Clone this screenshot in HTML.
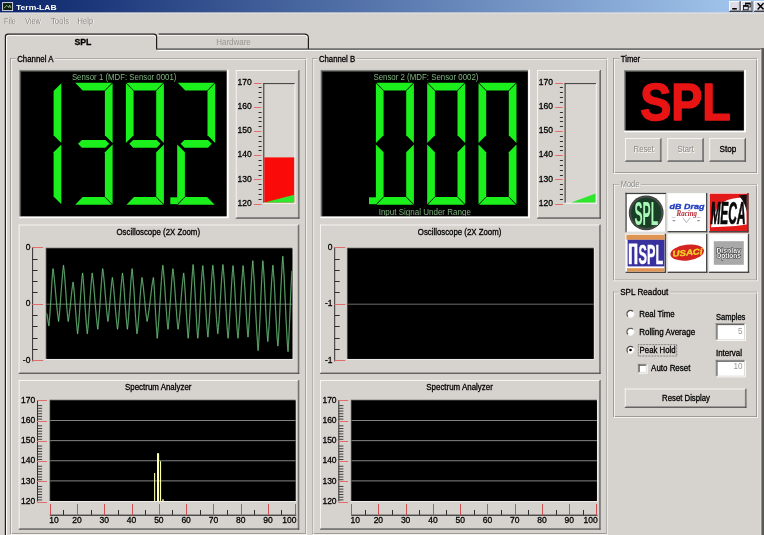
<!DOCTYPE html>
<html lang="en"><head><meta charset="utf-8"><title>Term-LAB</title>
<style>
html,body{margin:0;padding:0;}
body{width:764px;height:535px;overflow:hidden;background:#d6d3ce;position:relative;font-family:"Liberation Sans",sans-serif;font-size:8.2px;}
svg text{font-family:"Liberation Sans",sans-serif;}
</style></head><body>
<svg width="764" height="535" viewBox="0 0 764 535" font-family="'Liberation Sans', sans-serif" font-size="8.2" style="position:absolute;left:0;top:0;display:block;transform:translateZ(0);will-change:transform">
<defs><linearGradient id="tg" x1="0" y1="0" x2="1" y2="0"><stop offset="0" stop-color="#0a246a"/><stop offset="1" stop-color="#a6caf0"/></linearGradient></defs>
<rect x="0.00" y="0.00" width="764.00" height="535.00" fill="#d6d3ce" />
<rect x="0.00" y="0.00" width="764.00" height="12.60" fill="url(#tg)" />
<rect x="0.00" y="12.60" width="764.00" height="0.90" fill="#e6e5e6" />
<rect x="2.60" y="2.60" width="10.00" height="8.00" fill="#0e1e10" stroke="#e6e6f0" stroke-width="0.9"/>
<path d="M4.2,8.2 L5.6,6.4 L6.8,5.4 L8.0,6.6 L8.8,7.6 L9.6,5.2 L10.8,7.8" fill="none" stroke="#a4cc94" stroke-width="0.9"/>
<text x="16.00" y="9.80" font-size="8.1" text-anchor="start" fill="#fff" font-weight="bold" textLength="40.60" lengthAdjust="spacingAndGlyphs" >Term-LAB</text>
<rect x="729.20" y="1.10" width="11.40" height="10.70" fill="#dedde6" />
<rect x="729.20" y="1.10" width="11.40" height="0.80" fill="#fff" />
<rect x="729.20" y="1.10" width="0.80" height="10.70" fill="#fff" />
<rect x="729.20" y="11.00" width="11.40" height="0.90" fill="#303038" />
<rect x="739.70" y="1.10" width="0.90" height="10.70" fill="#303038" />
<rect x="730.00" y="10.20" width="9.70" height="0.80" fill="#85858c" />
<rect x="738.90" y="1.90" width="0.80" height="9.00" fill="#85858c" />
<rect x="741.00" y="1.10" width="11.40" height="10.70" fill="#dedde6" />
<rect x="741.00" y="1.10" width="11.40" height="0.80" fill="#fff" />
<rect x="741.00" y="1.10" width="0.80" height="10.70" fill="#fff" />
<rect x="741.00" y="11.00" width="11.40" height="0.90" fill="#303038" />
<rect x="751.50" y="1.10" width="0.90" height="10.70" fill="#303038" />
<rect x="741.80" y="10.20" width="9.70" height="0.80" fill="#85858c" />
<rect x="750.70" y="1.90" width="0.80" height="9.00" fill="#85858c" />
<rect x="754.00" y="1.10" width="12.00" height="10.70" fill="#dedde6" />
<rect x="754.00" y="1.10" width="12.00" height="0.80" fill="#fff" />
<rect x="754.00" y="1.10" width="0.80" height="10.70" fill="#fff" />
<rect x="754.00" y="11.00" width="12.00" height="0.90" fill="#303038" />
<rect x="765.10" y="1.10" width="0.90" height="10.70" fill="#303038" />
<rect x="754.80" y="10.20" width="10.30" height="0.80" fill="#85858c" />
<rect x="764.30" y="1.90" width="0.80" height="9.00" fill="#85858c" />
<rect x="732.20" y="8.00" width="4.60" height="1.60" fill="#000" />
<rect x="745.60" y="3.00" width="4.60" height="1.40" fill="#000" />
<rect x="745.60" y="3.00" width="4.60" height="4.00" fill="none" stroke="#000" stroke-width="0.8"/>
<rect x="743.60" y="5.60" width="4.60" height="4.20" fill="#dedde6" stroke="#000" stroke-width="0.8"/>
<rect x="743.60" y="5.40" width="4.60" height="1.40" fill="#000" />
<path d="M757.6,3.2 L763.6,9.4 M763.6,3.2 L757.6,9.4" stroke="#000" stroke-width="1.5" fill="none"/>
<text x="4.75" y="24.35" font-size="8.2" text-anchor="start" fill="#ffffff" font-weight="normal" textLength="12.00" lengthAdjust="spacingAndGlyphs" >File</text>
<text x="4.00" y="23.60" font-size="8.2" text-anchor="start" fill="#8a8884" font-weight="normal" textLength="12.00" lengthAdjust="spacingAndGlyphs" >File</text>
<text x="25.95" y="24.35" font-size="8.2" text-anchor="start" fill="#ffffff" font-weight="normal" textLength="15.60" lengthAdjust="spacingAndGlyphs" >View</text>
<text x="25.20" y="23.60" font-size="8.2" text-anchor="start" fill="#8a8884" font-weight="normal" textLength="15.60" lengthAdjust="spacingAndGlyphs" >View</text>
<text x="51.75" y="24.35" font-size="8.2" text-anchor="start" fill="#ffffff" font-weight="normal" textLength="18.00" lengthAdjust="spacingAndGlyphs" >Tools</text>
<text x="51.00" y="23.60" font-size="8.2" text-anchor="start" fill="#8a8884" font-weight="normal" textLength="18.00" lengthAdjust="spacingAndGlyphs" >Tools</text>
<text x="78.35" y="24.35" font-size="8.2" text-anchor="start" fill="#ffffff" font-weight="normal" textLength="15.60" lengthAdjust="spacingAndGlyphs" >Help</text>
<text x="77.60" y="23.60" font-size="8.2" text-anchor="start" fill="#8a8884" font-weight="normal" textLength="15.60" lengthAdjust="spacingAndGlyphs" >Help</text>
<path d="M5.4,535 L5.4,36.6 Q5.4,34.2 8.0,34.2 L153.8,34.2 Q156.6,34.2 156.6,37.0 L156.6,48.9" fill="none" stroke="#1c1c1c" stroke-width="1.2"/>
<path d="M6.55,535 L6.55,37.4 Q6.55,35.4 8.8,35.4 L153.4,35.4 Q155.5,35.4 155.5,37.5" fill="none" stroke="#fff" stroke-width="0.95"/>
<path d="M158.6,34.1 L304.6,34.1 Q308.4,34.1 308.4,38.0 L308.4,48.9" fill="none" stroke="#1c1c1c" stroke-width="1.2"/>
<path d="M157.7,35.3 L304.4,35.3 Q307.2,35.3 307.2,38.2" fill="none" stroke="#fff" stroke-width="0.95" opacity="0.9"/>
<line x1="156.10" y1="49.10" x2="764.00" y2="49.10" stroke="#3c3c3a" stroke-width="1.3" />
<line x1="157.40" y1="50.40" x2="761.00" y2="50.40" stroke="#fff" stroke-width="1.0" />
<rect x="761.00" y="48.20" width="3.00" height="490.00" fill="#5c5a56" />
<rect x="760.60" y="49.00" width="0.80" height="490.00" fill="#e6e5e1" />
<text x="74.40" y="45.30" font-size="8.6" text-anchor="start" fill="#000" font-weight="bold" textLength="17.00" lengthAdjust="spacingAndGlyphs"  stroke="#000" stroke-width="0.28">SPL</text>
<text x="216.20" y="44.60" font-size="8.2" text-anchor="start" fill="#97958f" font-weight="normal" textLength="34.60" lengthAdjust="spacingAndGlyphs" >Hardware</text>
<rect x="10.30" y="58.10" width="295.60" height="0.75" fill="#8a8884" />
<rect x="10.30" y="58.10" width="0.75" height="475.90" fill="#8a8884" />
<rect x="10.30" y="533.25" width="295.60" height="0.75" fill="#8a8884" />
<rect x="305.15" y="58.10" width="0.75" height="475.90" fill="#8a8884" />
<rect x="11.05" y="58.85" width="295.60" height="0.75" fill="#fbfbf9" />
<rect x="11.05" y="58.85" width="0.75" height="475.90" fill="#fbfbf9" />
<rect x="10.30" y="534.00" width="296.35" height="0.75" fill="#fbfbf9" />
<rect x="305.90" y="58.10" width="0.75" height="476.65" fill="#fbfbf9" />
<rect x="15.70" y="54.10" width="39.30" height="8.00" fill="#d6d3ce" />
<text x="17.20" y="62.00" font-size="8.2" text-anchor="start" fill="#000" font-weight="normal" textLength="36.30" lengthAdjust="spacingAndGlyphs"  stroke="#000" stroke-width="0.28">Channel A</text>
<rect x="19.10" y="69.80" width="209.60" height="148.40" fill="#ffffff" />
<rect x="19.10" y="69.80" width="207.70" height="146.70" fill="#8e8c88" />
<rect x="20.10" y="70.80" width="206.50" height="145.50" fill="#4a4a48" />
<rect x="21.10" y="71.80" width="205.20" height="144.20" fill="#000" />
<text x="71.90" y="79.90" font-size="8.2" text-anchor="start" fill="#7eb47e" font-weight="normal" textLength="104.50" lengthAdjust="spacingAndGlyphs" >Sensor 1 (MDF: Sensor 0001)</text>
<polygon points="61.30,83.35 61.30,143.00 53.60,135.30 53.60,91.05" fill="#1cf01c" />
<polygon points="61.30,204.25 61.30,144.60 53.60,152.30 53.60,196.55" fill="#1cf01c" />
<polygon points="75.15,82.80 112.05,82.80 104.55,90.50 82.65,90.50" fill="#1cf01c" />
<polygon points="112.60,83.35 112.60,143.00 104.90,135.30 104.90,91.05" fill="#1cf01c" />
<polygon points="78.00,143.80 81.85,139.95 105.35,139.95 109.20,143.80 105.35,147.65 81.85,147.65" fill="#1cf01c" />
<polygon points="112.60,204.25 112.60,144.60 104.90,152.30 104.90,196.55" fill="#1cf01c" />
<polygon points="75.15,204.80 112.05,204.80 104.55,197.10 82.65,197.10" fill="#1cf01c" />
<polygon points="126.45,82.80 163.35,82.80 155.85,90.50 133.95,90.50" fill="#1cf01c" />
<polygon points="163.90,83.35 163.90,143.00 156.20,135.30 156.20,91.05" fill="#1cf01c" />
<polygon points="163.90,204.25 163.90,144.60 156.20,152.30 156.20,196.55" fill="#1cf01c" />
<polygon points="126.45,204.80 163.35,204.80 155.85,197.10 133.95,197.10" fill="#1cf01c" />
<polygon points="125.90,83.35 125.90,143.00 133.60,135.30 133.60,91.05" fill="#1cf01c" />
<polygon points="129.30,143.80 133.15,139.95 156.65,139.95 160.50,143.80 156.65,147.65 133.15,147.65" fill="#1cf01c" />
<polygon points="177.75,82.80 214.65,82.80 207.15,90.50 185.25,90.50" fill="#1cf01c" />
<polygon points="215.20,83.35 215.20,143.00 207.50,135.30 207.50,91.05" fill="#1cf01c" />
<polygon points="180.60,143.80 184.45,139.95 207.95,139.95 211.80,143.80 207.95,147.65 184.45,147.65" fill="#1cf01c" />
<polygon points="177.20,204.25 177.20,144.60 184.90,152.30 184.90,196.55" fill="#1cf01c" />
<polygon points="177.75,204.80 214.65,204.80 207.15,197.10 185.25,197.10" fill="#1cf01c" />
<polygon points="170.30,197.30 177.80,197.30 177.80,204.20 170.30,204.20" fill="#1cf01c" />
<rect x="235.80" y="70.00" width="63.60" height="148.60" fill="#d6d3ce" />
<rect x="235.80" y="70.00" width="62.85" height="0.75" fill="#ffffff" />
<rect x="235.80" y="70.00" width="0.75" height="147.85" fill="#ffffff" />
<rect x="236.55" y="217.10" width="62.85" height="0.75" fill="#808080" />
<rect x="297.90" y="70.75" width="0.75" height="147.85" fill="#808080" />
<rect x="235.80" y="217.85" width="63.60" height="0.75" fill="#404040" />
<rect x="298.65" y="70.00" width="0.75" height="148.60" fill="#404040" />
<rect x="264.30" y="83.60" width="30.10" height="119.10" fill="#d9d6d1" />
<rect x="294.40" y="83.20" width="1.00" height="120.50" fill="#f8f8f6" />
<rect x="263.30" y="202.70" width="32.10" height="1.00" fill="#f8f8f6" />
<rect x="263.30" y="83.10" width="31.40" height="1.00" fill="#3a3a3a" />
<rect x="263.30" y="83.10" width="1.00" height="119.60" fill="#303030" />
<rect x="264.30" y="157.40" width="29.90" height="45.00" fill="#fb0a0a" />
<polygon points="264.50,202.40 294.20,202.40 294.20,194.70" fill="#2ee62e" />
<line x1="253.90" y1="204.50" x2="261.60" y2="204.50" stroke="#e06c6c" stroke-width="1" />
<text x="251.70" y="205.75" font-size="8.5" text-anchor="end" fill="#000" font-weight="normal"  stroke="#000" stroke-width="0.28">120</text>
<line x1="258.60" y1="199.50" x2="261.60" y2="199.50" stroke="#2c2c2c" stroke-width="1" />
<line x1="258.60" y1="194.50" x2="261.60" y2="194.50" stroke="#2c2c2c" stroke-width="1" />
<line x1="258.60" y1="189.50" x2="261.60" y2="189.50" stroke="#2c2c2c" stroke-width="1" />
<line x1="258.60" y1="184.50" x2="261.60" y2="184.50" stroke="#2c2c2c" stroke-width="1" />
<line x1="253.90" y1="179.50" x2="261.60" y2="179.50" stroke="#e06c6c" stroke-width="1" />
<text x="251.70" y="181.57" font-size="8.5" text-anchor="end" fill="#000" font-weight="normal"  stroke="#000" stroke-width="0.28">130</text>
<line x1="258.60" y1="175.50" x2="261.60" y2="175.50" stroke="#2c2c2c" stroke-width="1" />
<line x1="258.60" y1="170.50" x2="261.60" y2="170.50" stroke="#2c2c2c" stroke-width="1" />
<line x1="258.60" y1="165.50" x2="261.60" y2="165.50" stroke="#2c2c2c" stroke-width="1" />
<line x1="258.60" y1="160.50" x2="261.60" y2="160.50" stroke="#2c2c2c" stroke-width="1" />
<line x1="253.90" y1="155.50" x2="261.60" y2="155.50" stroke="#e06c6c" stroke-width="1" />
<text x="251.70" y="157.39" font-size="8.5" text-anchor="end" fill="#000" font-weight="normal"  stroke="#000" stroke-width="0.28">140</text>
<line x1="258.60" y1="150.50" x2="261.60" y2="150.50" stroke="#2c2c2c" stroke-width="1" />
<line x1="258.60" y1="146.50" x2="261.60" y2="146.50" stroke="#2c2c2c" stroke-width="1" />
<line x1="258.60" y1="141.50" x2="261.60" y2="141.50" stroke="#2c2c2c" stroke-width="1" />
<line x1="258.60" y1="136.50" x2="261.60" y2="136.50" stroke="#2c2c2c" stroke-width="1" />
<line x1="253.90" y1="131.50" x2="261.60" y2="131.50" stroke="#e06c6c" stroke-width="1" />
<text x="251.70" y="133.21" font-size="8.5" text-anchor="end" fill="#000" font-weight="normal"  stroke="#000" stroke-width="0.28">150</text>
<line x1="258.60" y1="126.50" x2="261.60" y2="126.50" stroke="#2c2c2c" stroke-width="1" />
<line x1="258.60" y1="121.50" x2="261.60" y2="121.50" stroke="#2c2c2c" stroke-width="1" />
<line x1="258.60" y1="117.50" x2="261.60" y2="117.50" stroke="#2c2c2c" stroke-width="1" />
<line x1="258.60" y1="112.50" x2="261.60" y2="112.50" stroke="#2c2c2c" stroke-width="1" />
<line x1="253.90" y1="107.50" x2="261.60" y2="107.50" stroke="#e06c6c" stroke-width="1" />
<text x="251.70" y="109.03" font-size="8.5" text-anchor="end" fill="#000" font-weight="normal"  stroke="#000" stroke-width="0.28">160</text>
<line x1="258.60" y1="102.50" x2="261.60" y2="102.50" stroke="#2c2c2c" stroke-width="1" />
<line x1="258.60" y1="97.50" x2="261.60" y2="97.50" stroke="#2c2c2c" stroke-width="1" />
<line x1="258.60" y1="92.50" x2="261.60" y2="92.50" stroke="#2c2c2c" stroke-width="1" />
<line x1="258.60" y1="87.50" x2="261.60" y2="87.50" stroke="#2c2c2c" stroke-width="1" />
<line x1="253.90" y1="83.50" x2="261.60" y2="83.50" stroke="#e06c6c" stroke-width="1" />
<text x="251.70" y="84.85" font-size="8.5" text-anchor="end" fill="#000" font-weight="normal"  stroke="#000" stroke-width="0.28">170</text>
<rect x="18.70" y="224.60" width="280.50" height="149.30" fill="#d6d3ce" />
<rect x="18.70" y="224.60" width="279.75" height="0.75" fill="#ffffff" />
<rect x="18.70" y="224.60" width="0.75" height="148.55" fill="#ffffff" />
<rect x="19.45" y="372.40" width="279.75" height="0.75" fill="#808080" />
<rect x="297.70" y="225.35" width="0.75" height="148.55" fill="#808080" />
<rect x="18.70" y="373.15" width="280.50" height="0.75" fill="#404040" />
<rect x="298.45" y="224.60" width="0.75" height="149.30" fill="#404040" />
<text x="116.50" y="234.60" font-size="8.2" text-anchor="start" fill="#000" font-weight="normal" textLength="83.50" lengthAdjust="spacingAndGlyphs"  stroke="#000" stroke-width="0.28">Oscilloscope (2X Zoom)</text>
<rect x="45.60" y="247.60" width="247.60" height="112.10" fill="#f4f3f0" />
<rect x="45.60" y="247.60" width="246.80" height="111.30" fill="#6a6865" />
<rect x="46.40" y="248.40" width="246.00" height="110.50" fill="#000" />
<line x1="32.60" y1="247.20" x2="32.60" y2="361.40" stroke="#303030" stroke-width="1" />
<line x1="32.30" y1="247.50" x2="43.20" y2="247.50" stroke="#e06c6c" stroke-width="1" />
<text x="30.40" y="249.60" font-size="8.5" text-anchor="end" fill="#000" font-weight="normal"  stroke="#000" stroke-width="0.28">0</text>
<line x1="32.60" y1="259.50" x2="37.60" y2="259.50" stroke="#2c2c2c" stroke-width="1" />
<line x1="32.60" y1="270.50" x2="37.60" y2="270.50" stroke="#2c2c2c" stroke-width="1" />
<line x1="32.60" y1="281.50" x2="37.60" y2="281.50" stroke="#2c2c2c" stroke-width="1" />
<line x1="32.60" y1="292.50" x2="37.60" y2="292.50" stroke="#2c2c2c" stroke-width="1" />
<line x1="32.30" y1="304.50" x2="43.20" y2="304.50" stroke="#e06c6c" stroke-width="1" />
<text x="30.40" y="306.20" font-size="8.5" text-anchor="end" fill="#000" font-weight="normal"  stroke="#000" stroke-width="0.28">0</text>
<line x1="32.60" y1="315.50" x2="37.60" y2="315.50" stroke="#2c2c2c" stroke-width="1" />
<line x1="32.60" y1="326.50" x2="37.60" y2="326.50" stroke="#2c2c2c" stroke-width="1" />
<line x1="32.60" y1="338.50" x2="37.60" y2="338.50" stroke="#2c2c2c" stroke-width="1" />
<line x1="32.60" y1="349.50" x2="37.60" y2="349.50" stroke="#2c2c2c" stroke-width="1" />
<line x1="32.30" y1="360.50" x2="43.20" y2="360.50" stroke="#e06c6c" stroke-width="1" />
<text x="30.40" y="362.80" font-size="8.5" text-anchor="end" fill="#000" font-weight="normal"  stroke="#000" stroke-width="0.28">-0</text>
<line x1="46.40" y1="304.20" x2="292.40" y2="304.20" stroke="#808080" stroke-width="0.85" />
<path d="M46.7,313.5 L47.0,314.6 L47.3,316.1 L47.5,317.8 L47.8,319.7 L48.1,321.5 L48.4,323.3 L48.7,324.7 L48.9,325.8 L49.4,320.7 L49.9,313.9 L50.4,305.9 L51.0,297.3 L51.5,288.6 L52.0,280.6 L52.5,273.8 L53.0,268.7 L53.7,273.4 L54.4,279.7 L55.1,287.0 L55.8,295.0 L56.5,303.0 L57.2,310.4 L57.9,316.6 L58.6,321.4 L59.2,316.3 L59.8,309.7 L60.4,301.8 L61.0,293.3 L61.7,284.8 L62.3,277.0 L62.9,270.4 L63.5,265.3 L64.1,270.4 L64.7,277.0 L65.3,284.8 L65.9,293.3 L66.4,301.8 L67.0,309.7 L67.6,316.3 L68.2,321.4 L68.8,317.8 L69.4,313.2 L70.1,307.7 L70.7,301.7 L71.3,295.8 L71.9,290.3 L72.5,285.7 L73.1,282.1 L73.7,286.8 L74.3,292.9 L74.8,300.1 L75.4,307.9 L76.0,315.7 L76.5,322.9 L77.1,329.0 L77.6,333.7 L78.2,328.2 L78.9,321.1 L79.5,312.6 L80.1,303.4 L80.7,294.2 L81.3,285.8 L81.9,278.6 L82.6,273.1 L83.2,278.6 L83.7,285.8 L84.3,294.2 L84.9,303.4 L85.5,312.6 L86.1,321.1 L86.7,328.2 L87.3,333.7 L87.9,328.2 L88.5,321.1 L89.1,312.6 L89.7,303.4 L90.4,294.2 L91.0,285.8 L91.6,278.6 L92.2,273.1 L92.9,278.2 L93.6,284.8 L94.3,292.7 L95.0,301.2 L95.7,309.7 L96.4,317.5 L97.1,324.1 L97.8,329.2 L98.4,323.7 L99.0,316.6 L99.7,308.1 L100.3,298.9 L100.9,289.8 L101.5,281.3 L102.1,274.1 L102.7,268.7 L103.4,273.4 L104.0,279.7 L104.7,287.0 L105.3,295.0 L106.0,303.0 L106.6,310.4 L107.3,316.6 L107.9,321.4 L108.5,317.4 L109.0,312.2 L109.6,306.1 L110.1,299.5 L110.7,292.9 L111.3,286.8 L111.8,281.6 L112.4,277.6 L113.0,282.3 L113.7,288.4 L114.3,295.6 L115.0,303.4 L115.6,311.2 L116.3,318.4 L116.9,324.5 L117.5,329.2 L118.2,324.1 L118.8,317.5 L119.4,309.7 L120.0,301.2 L120.6,292.7 L121.2,284.8 L121.9,278.2 L122.5,273.1 L123.1,278.2 L123.7,284.8 L124.3,292.7 L124.9,301.2 L125.6,309.7 L126.2,317.5 L126.8,324.1 L127.4,329.2 L128.0,323.7 L128.6,316.6 L129.2,308.1 L129.8,298.9 L130.4,289.8 L130.9,281.3 L131.5,274.1 L132.1,268.7 L132.7,274.5 L133.3,282.2 L134.0,291.3 L134.6,301.2 L135.2,311.0 L135.8,320.1 L136.4,327.8 L137.0,333.7 L137.7,328.6 L138.3,322.0 L138.9,314.2 L139.5,305.7 L140.1,297.2 L140.7,289.3 L141.4,282.7 L142.0,277.6 L142.6,281.6 L143.3,286.8 L143.9,292.9 L144.6,299.5 L145.2,306.1 L145.8,312.2 L146.5,317.4 L147.1,321.4 L147.9,317.4 L148.7,312.2 L149.5,306.1 L150.3,299.5 L151.1,292.9 L151.8,286.8 L152.6,281.6 L153.4,277.6 L153.9,283.1 L154.4,290.3 L154.8,298.7 L155.3,307.9 L155.8,317.1 L156.3,325.5 L156.8,332.7 L157.2,338.2 L157.9,331.6 L158.6,323.0 L159.3,312.8 L160.0,301.7 L160.7,290.7 L161.4,280.5 L162.1,271.9 L162.8,265.3 L163.5,271.1 L164.1,278.6 L164.8,287.6 L165.4,297.3 L166.1,306.9 L166.7,315.9 L167.3,323.4 L168.0,329.2 L168.6,323.7 L169.2,316.6 L169.8,308.1 L170.5,298.9 L171.1,289.8 L171.7,281.3 L172.3,274.1 L172.9,268.7 L173.6,274.1 L174.2,281.3 L174.9,289.8 L175.5,298.9 L176.2,308.1 L176.8,316.6 L177.4,323.7 L178.1,329.2 L178.8,324.1 L179.5,317.5 L180.2,309.7 L180.9,301.2 L181.6,292.7 L182.3,284.8 L183.0,278.2 L183.7,273.1 L184.3,279.0 L184.8,286.7 L185.4,295.8 L185.9,305.7 L186.5,315.5 L187.1,324.6 L187.6,332.3 L188.2,338.2 L188.8,331.5 L189.4,322.8 L190.0,312.5 L190.6,301.4 L191.3,290.3 L191.9,280.0 L192.5,271.3 L193.1,264.6 L193.7,271.3 L194.3,280.0 L194.9,290.3 L195.5,301.4 L196.1,312.5 L196.6,322.8 L197.2,331.5 L197.8,338.2 L198.4,331.6 L199.1,323.1 L199.7,312.9 L200.3,302.0 L200.9,291.0 L201.5,280.9 L202.1,272.3 L202.8,265.7 L203.4,272.2 L204.0,280.6 L204.7,290.6 L205.3,301.4 L206.0,312.2 L206.6,322.2 L207.3,330.6 L207.9,337.0 L208.5,330.6 L209.1,322.1 L209.8,312.0 L210.4,301.2 L211.0,290.3 L211.6,280.3 L212.2,271.8 L212.8,265.3 L213.5,271.5 L214.1,279.6 L214.7,289.1 L215.3,299.5 L215.9,309.9 L216.5,319.4 L217.2,327.5 L217.8,333.7 L218.4,327.5 L219.1,319.3 L219.7,309.6 L220.4,299.2 L221.0,288.7 L221.6,279.0 L222.3,270.9 L222.9,264.6 L223.6,271.3 L224.2,280.0 L224.9,290.3 L225.5,301.4 L226.2,312.5 L226.8,322.8 L227.4,331.5 L228.1,338.2 L228.7,331.6 L229.3,323.1 L229.9,312.9 L230.6,302.0 L231.2,291.0 L231.8,280.9 L232.4,272.3 L233.0,265.7 L233.6,272.3 L234.3,280.9 L234.9,291.0 L235.5,302.0 L236.1,312.9 L236.7,323.1 L237.3,331.6 L238.0,338.2 L238.6,331.6 L239.2,323.1 L239.9,312.9 L240.5,302.0 L241.2,291.0 L241.8,280.9 L242.5,272.3 L243.1,265.7 L243.7,272.2 L244.3,280.6 L245.0,290.6 L245.6,301.4 L246.2,312.2 L246.8,322.2 L247.4,330.6 L248.0,337.0 L248.6,330.2 L249.2,321.1 L249.8,310.5 L250.4,298.9 L251.0,287.4 L251.6,276.7 L252.2,267.7 L252.8,260.8 L253.4,268.9 L254.1,279.5 L254.8,292.1 L255.4,305.7 L256.1,319.2 L256.8,331.8 L257.5,342.4 L258.1,350.5 L258.7,342.4 L259.3,331.8 L259.9,319.2 L260.5,305.7 L261.1,292.1 L261.7,279.5 L262.3,268.9 L262.8,260.8 L263.5,268.1 L264.1,277.7 L264.7,288.9 L265.3,301.2 L265.9,313.4 L266.5,324.7 L267.2,334.3 L267.8,341.5 L268.4,334.7 L269.1,325.6 L269.7,315.0 L270.4,303.4 L271.0,291.9 L271.6,281.2 L272.3,272.2 L272.9,265.3 L273.5,272.6 L274.2,282.1 L274.8,293.4 L275.4,305.7 L276.0,317.9 L276.6,329.2 L277.2,338.7 L277.9,346.0 L278.5,337.9 L279.1,327.3 L279.7,314.8 L280.3,301.2 L280.9,287.6 L281.6,275.0 L282.2,264.4 L282.8,256.3 L283.4,264.9 L284.1,276.2 L284.7,289.5 L285.4,304.0 L286.0,318.4 L286.7,331.7 L287.3,343.0 L288.0,351.6 L288.5,344.3 L289.0,334.8 L289.5,323.5 L290.0,311.3 L290.5,299.0 L291.0,287.7 L291.5,278.2 L292.0,270.9" fill="none" stroke="#1e6430" stroke-width="1.6" stroke-linejoin="round" opacity="0.5"/><path d="M46.7,313.5 L47.0,314.6 L47.3,316.1 L47.5,317.8 L47.8,319.7 L48.1,321.5 L48.4,323.3 L48.7,324.7 L48.9,325.8 L49.4,320.7 L49.9,313.9 L50.4,305.9 L51.0,297.3 L51.5,288.6 L52.0,280.6 L52.5,273.8 L53.0,268.7 L53.7,273.4 L54.4,279.7 L55.1,287.0 L55.8,295.0 L56.5,303.0 L57.2,310.4 L57.9,316.6 L58.6,321.4 L59.2,316.3 L59.8,309.7 L60.4,301.8 L61.0,293.3 L61.7,284.8 L62.3,277.0 L62.9,270.4 L63.5,265.3 L64.1,270.4 L64.7,277.0 L65.3,284.8 L65.9,293.3 L66.4,301.8 L67.0,309.7 L67.6,316.3 L68.2,321.4 L68.8,317.8 L69.4,313.2 L70.1,307.7 L70.7,301.7 L71.3,295.8 L71.9,290.3 L72.5,285.7 L73.1,282.1 L73.7,286.8 L74.3,292.9 L74.8,300.1 L75.4,307.9 L76.0,315.7 L76.5,322.9 L77.1,329.0 L77.6,333.7 L78.2,328.2 L78.9,321.1 L79.5,312.6 L80.1,303.4 L80.7,294.2 L81.3,285.8 L81.9,278.6 L82.6,273.1 L83.2,278.6 L83.7,285.8 L84.3,294.2 L84.9,303.4 L85.5,312.6 L86.1,321.1 L86.7,328.2 L87.3,333.7 L87.9,328.2 L88.5,321.1 L89.1,312.6 L89.7,303.4 L90.4,294.2 L91.0,285.8 L91.6,278.6 L92.2,273.1 L92.9,278.2 L93.6,284.8 L94.3,292.7 L95.0,301.2 L95.7,309.7 L96.4,317.5 L97.1,324.1 L97.8,329.2 L98.4,323.7 L99.0,316.6 L99.7,308.1 L100.3,298.9 L100.9,289.8 L101.5,281.3 L102.1,274.1 L102.7,268.7 L103.4,273.4 L104.0,279.7 L104.7,287.0 L105.3,295.0 L106.0,303.0 L106.6,310.4 L107.3,316.6 L107.9,321.4 L108.5,317.4 L109.0,312.2 L109.6,306.1 L110.1,299.5 L110.7,292.9 L111.3,286.8 L111.8,281.6 L112.4,277.6 L113.0,282.3 L113.7,288.4 L114.3,295.6 L115.0,303.4 L115.6,311.2 L116.3,318.4 L116.9,324.5 L117.5,329.2 L118.2,324.1 L118.8,317.5 L119.4,309.7 L120.0,301.2 L120.6,292.7 L121.2,284.8 L121.9,278.2 L122.5,273.1 L123.1,278.2 L123.7,284.8 L124.3,292.7 L124.9,301.2 L125.6,309.7 L126.2,317.5 L126.8,324.1 L127.4,329.2 L128.0,323.7 L128.6,316.6 L129.2,308.1 L129.8,298.9 L130.4,289.8 L130.9,281.3 L131.5,274.1 L132.1,268.7 L132.7,274.5 L133.3,282.2 L134.0,291.3 L134.6,301.2 L135.2,311.0 L135.8,320.1 L136.4,327.8 L137.0,333.7 L137.7,328.6 L138.3,322.0 L138.9,314.2 L139.5,305.7 L140.1,297.2 L140.7,289.3 L141.4,282.7 L142.0,277.6 L142.6,281.6 L143.3,286.8 L143.9,292.9 L144.6,299.5 L145.2,306.1 L145.8,312.2 L146.5,317.4 L147.1,321.4 L147.9,317.4 L148.7,312.2 L149.5,306.1 L150.3,299.5 L151.1,292.9 L151.8,286.8 L152.6,281.6 L153.4,277.6 L153.9,283.1 L154.4,290.3 L154.8,298.7 L155.3,307.9 L155.8,317.1 L156.3,325.5 L156.8,332.7 L157.2,338.2 L157.9,331.6 L158.6,323.0 L159.3,312.8 L160.0,301.7 L160.7,290.7 L161.4,280.5 L162.1,271.9 L162.8,265.3 L163.5,271.1 L164.1,278.6 L164.8,287.6 L165.4,297.3 L166.1,306.9 L166.7,315.9 L167.3,323.4 L168.0,329.2 L168.6,323.7 L169.2,316.6 L169.8,308.1 L170.5,298.9 L171.1,289.8 L171.7,281.3 L172.3,274.1 L172.9,268.7 L173.6,274.1 L174.2,281.3 L174.9,289.8 L175.5,298.9 L176.2,308.1 L176.8,316.6 L177.4,323.7 L178.1,329.2 L178.8,324.1 L179.5,317.5 L180.2,309.7 L180.9,301.2 L181.6,292.7 L182.3,284.8 L183.0,278.2 L183.7,273.1 L184.3,279.0 L184.8,286.7 L185.4,295.8 L185.9,305.7 L186.5,315.5 L187.1,324.6 L187.6,332.3 L188.2,338.2 L188.8,331.5 L189.4,322.8 L190.0,312.5 L190.6,301.4 L191.3,290.3 L191.9,280.0 L192.5,271.3 L193.1,264.6 L193.7,271.3 L194.3,280.0 L194.9,290.3 L195.5,301.4 L196.1,312.5 L196.6,322.8 L197.2,331.5 L197.8,338.2 L198.4,331.6 L199.1,323.1 L199.7,312.9 L200.3,302.0 L200.9,291.0 L201.5,280.9 L202.1,272.3 L202.8,265.7 L203.4,272.2 L204.0,280.6 L204.7,290.6 L205.3,301.4 L206.0,312.2 L206.6,322.2 L207.3,330.6 L207.9,337.0 L208.5,330.6 L209.1,322.1 L209.8,312.0 L210.4,301.2 L211.0,290.3 L211.6,280.3 L212.2,271.8 L212.8,265.3 L213.5,271.5 L214.1,279.6 L214.7,289.1 L215.3,299.5 L215.9,309.9 L216.5,319.4 L217.2,327.5 L217.8,333.7 L218.4,327.5 L219.1,319.3 L219.7,309.6 L220.4,299.2 L221.0,288.7 L221.6,279.0 L222.3,270.9 L222.9,264.6 L223.6,271.3 L224.2,280.0 L224.9,290.3 L225.5,301.4 L226.2,312.5 L226.8,322.8 L227.4,331.5 L228.1,338.2 L228.7,331.6 L229.3,323.1 L229.9,312.9 L230.6,302.0 L231.2,291.0 L231.8,280.9 L232.4,272.3 L233.0,265.7 L233.6,272.3 L234.3,280.9 L234.9,291.0 L235.5,302.0 L236.1,312.9 L236.7,323.1 L237.3,331.6 L238.0,338.2 L238.6,331.6 L239.2,323.1 L239.9,312.9 L240.5,302.0 L241.2,291.0 L241.8,280.9 L242.5,272.3 L243.1,265.7 L243.7,272.2 L244.3,280.6 L245.0,290.6 L245.6,301.4 L246.2,312.2 L246.8,322.2 L247.4,330.6 L248.0,337.0 L248.6,330.2 L249.2,321.1 L249.8,310.5 L250.4,298.9 L251.0,287.4 L251.6,276.7 L252.2,267.7 L252.8,260.8 L253.4,268.9 L254.1,279.5 L254.8,292.1 L255.4,305.7 L256.1,319.2 L256.8,331.8 L257.5,342.4 L258.1,350.5 L258.7,342.4 L259.3,331.8 L259.9,319.2 L260.5,305.7 L261.1,292.1 L261.7,279.5 L262.3,268.9 L262.8,260.8 L263.5,268.1 L264.1,277.7 L264.7,288.9 L265.3,301.2 L265.9,313.4 L266.5,324.7 L267.2,334.3 L267.8,341.5 L268.4,334.7 L269.1,325.6 L269.7,315.0 L270.4,303.4 L271.0,291.9 L271.6,281.2 L272.3,272.2 L272.9,265.3 L273.5,272.6 L274.2,282.1 L274.8,293.4 L275.4,305.7 L276.0,317.9 L276.6,329.2 L277.2,338.7 L277.9,346.0 L278.5,337.9 L279.1,327.3 L279.7,314.8 L280.3,301.2 L280.9,287.6 L281.6,275.0 L282.2,264.4 L282.8,256.3 L283.4,264.9 L284.1,276.2 L284.7,289.5 L285.4,304.0 L286.0,318.4 L286.7,331.7 L287.3,343.0 L288.0,351.6 L288.5,344.3 L289.0,334.8 L289.5,323.5 L290.0,311.3 L290.5,299.0 L291.0,287.7 L291.5,278.2 L292.0,270.9" fill="none" stroke="#7ccc88" stroke-width="0.7" stroke-linejoin="round"/>
<rect x="18.70" y="380.00" width="280.50" height="149.60" fill="#d6d3ce" />
<rect x="18.70" y="380.00" width="279.75" height="0.75" fill="#ffffff" />
<rect x="18.70" y="380.00" width="0.75" height="148.85" fill="#ffffff" />
<rect x="19.45" y="528.10" width="279.75" height="0.75" fill="#808080" />
<rect x="297.70" y="380.75" width="0.75" height="148.85" fill="#808080" />
<rect x="18.70" y="528.85" width="280.50" height="0.75" fill="#404040" />
<rect x="298.45" y="380.00" width="0.75" height="149.60" fill="#404040" />
<text x="125.00" y="390.00" font-size="8.2" text-anchor="start" fill="#000" font-weight="normal" textLength="66.50" lengthAdjust="spacingAndGlyphs"  stroke="#000" stroke-width="0.28">Spectrum Analyzer</text>
<rect x="49.40" y="399.60" width="247.00" height="102.20" fill="#f4f3f0" />
<rect x="49.40" y="399.60" width="246.20" height="101.40" fill="#6a6865" />
<rect x="50.20" y="400.40" width="245.40" height="100.60" fill="#000" />
<line x1="50.20" y1="420.52" x2="295.60" y2="420.52" stroke="#9c9c9c" stroke-width="0.85" />
<line x1="50.20" y1="440.64" x2="295.60" y2="440.64" stroke="#9c9c9c" stroke-width="0.85" />
<line x1="50.20" y1="460.76" x2="295.60" y2="460.76" stroke="#9c9c9c" stroke-width="0.85" />
<line x1="50.20" y1="480.88" x2="295.60" y2="480.88" stroke="#9c9c9c" stroke-width="0.85" />
<line x1="37.50" y1="400.00" x2="37.50" y2="501.40" stroke="#303030" stroke-width="1" />
<line x1="37.10" y1="502.50" x2="46.90" y2="502.50" stroke="#e06c6c" stroke-width="1" />
<text x="35.30" y="503.70" font-size="8.5" text-anchor="end" fill="#000" font-weight="normal"  stroke="#000" stroke-width="0.28">120</text>
<line x1="37.50" y1="499.90" x2="42.10" y2="499.90" stroke="#2c2c2c" stroke-width="0.9" />
<line x1="37.50" y1="497.21" x2="42.10" y2="497.21" stroke="#2c2c2c" stroke-width="0.9" />
<line x1="37.50" y1="494.52" x2="42.10" y2="494.52" stroke="#2c2c2c" stroke-width="0.9" />
<line x1="37.50" y1="491.83" x2="42.10" y2="491.83" stroke="#2c2c2c" stroke-width="0.9" />
<line x1="37.50" y1="489.14" x2="42.10" y2="489.14" stroke="#2c2c2c" stroke-width="0.9" />
<line x1="37.50" y1="486.45" x2="42.10" y2="486.45" stroke="#2c2c2c" stroke-width="0.9" />
<line x1="37.10" y1="481.50" x2="46.90" y2="481.50" stroke="#e06c6c" stroke-width="1" />
<text x="35.30" y="483.50" font-size="8.5" text-anchor="end" fill="#000" font-weight="normal"  stroke="#000" stroke-width="0.28">130</text>
<line x1="37.50" y1="479.70" x2="42.10" y2="479.70" stroke="#2c2c2c" stroke-width="0.9" />
<line x1="37.50" y1="477.01" x2="42.10" y2="477.01" stroke="#2c2c2c" stroke-width="0.9" />
<line x1="37.50" y1="474.32" x2="42.10" y2="474.32" stroke="#2c2c2c" stroke-width="0.9" />
<line x1="37.50" y1="471.63" x2="42.10" y2="471.63" stroke="#2c2c2c" stroke-width="0.9" />
<line x1="37.50" y1="468.94" x2="42.10" y2="468.94" stroke="#2c2c2c" stroke-width="0.9" />
<line x1="37.50" y1="466.25" x2="42.10" y2="466.25" stroke="#2c2c2c" stroke-width="0.9" />
<line x1="37.10" y1="461.50" x2="46.90" y2="461.50" stroke="#e06c6c" stroke-width="1" />
<text x="35.30" y="463.30" font-size="8.5" text-anchor="end" fill="#000" font-weight="normal"  stroke="#000" stroke-width="0.28">140</text>
<line x1="37.50" y1="459.50" x2="42.10" y2="459.50" stroke="#2c2c2c" stroke-width="0.9" />
<line x1="37.50" y1="456.81" x2="42.10" y2="456.81" stroke="#2c2c2c" stroke-width="0.9" />
<line x1="37.50" y1="454.12" x2="42.10" y2="454.12" stroke="#2c2c2c" stroke-width="0.9" />
<line x1="37.50" y1="451.43" x2="42.10" y2="451.43" stroke="#2c2c2c" stroke-width="0.9" />
<line x1="37.50" y1="448.74" x2="42.10" y2="448.74" stroke="#2c2c2c" stroke-width="0.9" />
<line x1="37.50" y1="446.05" x2="42.10" y2="446.05" stroke="#2c2c2c" stroke-width="0.9" />
<line x1="37.10" y1="441.50" x2="46.90" y2="441.50" stroke="#e06c6c" stroke-width="1" />
<text x="35.30" y="443.10" font-size="8.5" text-anchor="end" fill="#000" font-weight="normal"  stroke="#000" stroke-width="0.28">150</text>
<line x1="37.50" y1="439.30" x2="42.10" y2="439.30" stroke="#2c2c2c" stroke-width="0.9" />
<line x1="37.50" y1="436.61" x2="42.10" y2="436.61" stroke="#2c2c2c" stroke-width="0.9" />
<line x1="37.50" y1="433.92" x2="42.10" y2="433.92" stroke="#2c2c2c" stroke-width="0.9" />
<line x1="37.50" y1="431.23" x2="42.10" y2="431.23" stroke="#2c2c2c" stroke-width="0.9" />
<line x1="37.50" y1="428.54" x2="42.10" y2="428.54" stroke="#2c2c2c" stroke-width="0.9" />
<line x1="37.50" y1="425.85" x2="42.10" y2="425.85" stroke="#2c2c2c" stroke-width="0.9" />
<line x1="37.10" y1="421.50" x2="46.90" y2="421.50" stroke="#e06c6c" stroke-width="1" />
<text x="35.30" y="422.90" font-size="8.5" text-anchor="end" fill="#000" font-weight="normal"  stroke="#000" stroke-width="0.28">160</text>
<line x1="37.50" y1="419.10" x2="42.10" y2="419.10" stroke="#2c2c2c" stroke-width="0.9" />
<line x1="37.50" y1="416.41" x2="42.10" y2="416.41" stroke="#2c2c2c" stroke-width="0.9" />
<line x1="37.50" y1="413.72" x2="42.10" y2="413.72" stroke="#2c2c2c" stroke-width="0.9" />
<line x1="37.50" y1="411.03" x2="42.10" y2="411.03" stroke="#2c2c2c" stroke-width="0.9" />
<line x1="37.50" y1="408.34" x2="42.10" y2="408.34" stroke="#2c2c2c" stroke-width="0.9" />
<line x1="37.50" y1="405.65" x2="42.10" y2="405.65" stroke="#2c2c2c" stroke-width="0.9" />
<line x1="37.10" y1="400.50" x2="46.90" y2="400.50" stroke="#e06c6c" stroke-width="1" />
<text x="35.30" y="402.70" font-size="8.5" text-anchor="end" fill="#000" font-weight="normal"  stroke="#000" stroke-width="0.28">170</text>
<line x1="49.80" y1="515.20" x2="296.20" y2="515.20" stroke="#101010" stroke-width="1" />
<line x1="50.50" y1="504.10" x2="50.50" y2="515.30" stroke="#cc5050" stroke-width="1" />
<text x="49.20" y="523.10" font-size="8.5" text-anchor="start" fill="#000" font-weight="normal"  stroke="#000" stroke-width="0.28">10</text>
<line x1="63.50" y1="510.00" x2="63.50" y2="514.90" stroke="#2c2c2c" stroke-width="1" />
<line x1="77.50" y1="504.10" x2="77.50" y2="515.30" stroke="#cc5050" stroke-width="1" />
<text x="77.07" y="523.10" font-size="8.5" text-anchor="middle" fill="#000" font-weight="normal"  stroke="#000" stroke-width="0.28">20</text>
<line x1="91.50" y1="510.00" x2="91.50" y2="514.90" stroke="#2c2c2c" stroke-width="1" />
<line x1="104.50" y1="504.10" x2="104.50" y2="515.30" stroke="#cc5050" stroke-width="1" />
<text x="104.33" y="523.10" font-size="8.5" text-anchor="middle" fill="#000" font-weight="normal"  stroke="#000" stroke-width="0.28">30</text>
<line x1="118.50" y1="510.00" x2="118.50" y2="514.90" stroke="#2c2c2c" stroke-width="1" />
<line x1="132.50" y1="504.10" x2="132.50" y2="515.30" stroke="#cc5050" stroke-width="1" />
<text x="131.60" y="523.10" font-size="8.5" text-anchor="middle" fill="#000" font-weight="normal"  stroke="#000" stroke-width="0.28">40</text>
<line x1="145.50" y1="510.00" x2="145.50" y2="514.90" stroke="#2c2c2c" stroke-width="1" />
<line x1="159.50" y1="504.10" x2="159.50" y2="515.30" stroke="#cc5050" stroke-width="1" />
<text x="158.87" y="523.10" font-size="8.5" text-anchor="middle" fill="#000" font-weight="normal"  stroke="#000" stroke-width="0.28">50</text>
<line x1="172.50" y1="510.00" x2="172.50" y2="514.90" stroke="#2c2c2c" stroke-width="1" />
<line x1="186.50" y1="504.10" x2="186.50" y2="515.30" stroke="#cc5050" stroke-width="1" />
<text x="186.13" y="523.10" font-size="8.5" text-anchor="middle" fill="#000" font-weight="normal"  stroke="#000" stroke-width="0.28">60</text>
<line x1="200.50" y1="510.00" x2="200.50" y2="514.90" stroke="#2c2c2c" stroke-width="1" />
<line x1="213.50" y1="504.10" x2="213.50" y2="515.30" stroke="#cc5050" stroke-width="1" />
<text x="213.40" y="523.10" font-size="8.5" text-anchor="middle" fill="#000" font-weight="normal"  stroke="#000" stroke-width="0.28">70</text>
<line x1="227.50" y1="510.00" x2="227.50" y2="514.90" stroke="#2c2c2c" stroke-width="1" />
<line x1="241.50" y1="504.10" x2="241.50" y2="515.30" stroke="#cc5050" stroke-width="1" />
<text x="240.67" y="523.10" font-size="8.5" text-anchor="middle" fill="#000" font-weight="normal"  stroke="#000" stroke-width="0.28">80</text>
<line x1="254.50" y1="510.00" x2="254.50" y2="514.90" stroke="#2c2c2c" stroke-width="1" />
<line x1="268.50" y1="504.10" x2="268.50" y2="515.30" stroke="#cc5050" stroke-width="1" />
<text x="267.93" y="523.10" font-size="8.5" text-anchor="middle" fill="#000" font-weight="normal"  stroke="#000" stroke-width="0.28">90</text>
<line x1="281.50" y1="510.00" x2="281.50" y2="514.90" stroke="#2c2c2c" stroke-width="1" />
<line x1="295.50" y1="504.10" x2="295.50" y2="515.30" stroke="#cc5050" stroke-width="1" />
<text x="296.50" y="523.10" font-size="8.5" text-anchor="end" fill="#000" font-weight="normal"  stroke="#000" stroke-width="0.28">100</text>
<rect x="154.10" y="473.00" width="1.10" height="28.00" fill="#ffffb0" />
<rect x="157.00" y="453.20" width="2.10" height="47.80" fill="#ffffb0" />
<rect x="160.00" y="461.20" width="1.10" height="39.80" fill="#ffffb0" />
<rect x="162.20" y="499.30" width="1.50" height="1.70" fill="#ffffb0" />
<rect x="312.60" y="58.10" width="294.20" height="0.75" fill="#8a8884" />
<rect x="312.60" y="58.10" width="0.75" height="475.90" fill="#8a8884" />
<rect x="312.60" y="533.25" width="294.20" height="0.75" fill="#8a8884" />
<rect x="606.05" y="58.10" width="0.75" height="475.90" fill="#8a8884" />
<rect x="313.35" y="58.85" width="294.20" height="0.75" fill="#fbfbf9" />
<rect x="313.35" y="58.85" width="0.75" height="475.90" fill="#fbfbf9" />
<rect x="312.60" y="534.00" width="294.95" height="0.75" fill="#fbfbf9" />
<rect x="606.80" y="58.10" width="0.75" height="476.65" fill="#fbfbf9" />
<rect x="317.40" y="54.10" width="39.30" height="8.00" fill="#d6d3ce" />
<text x="318.90" y="62.00" font-size="8.2" text-anchor="start" fill="#000" font-weight="normal" textLength="36.30" lengthAdjust="spacingAndGlyphs"  stroke="#000" stroke-width="0.28">Channel B</text>
<rect x="320.40" y="69.80" width="209.60" height="148.40" fill="#ffffff" />
<rect x="320.40" y="69.80" width="207.70" height="146.70" fill="#8e8c88" />
<rect x="321.40" y="70.80" width="206.50" height="145.50" fill="#4a4a48" />
<rect x="322.40" y="71.80" width="205.20" height="144.20" fill="#000" />
<text x="373.40" y="79.90" font-size="8.2" text-anchor="start" fill="#7eb47e" font-weight="normal" textLength="105.00" lengthAdjust="spacingAndGlyphs" >Sensor 2 (MDF: Sensor 0002)</text>
<polygon points="376.45,82.80 413.35,82.80 405.85,90.50 383.95,90.50" fill="#1cf01c" />
<polygon points="413.90,83.35 413.90,143.00 406.20,135.30 406.20,91.05" fill="#1cf01c" />
<polygon points="413.90,204.25 413.90,144.60 406.20,152.30 406.20,196.55" fill="#1cf01c" />
<polygon points="376.45,204.80 413.35,204.80 405.85,197.10 383.95,197.10" fill="#1cf01c" />
<polygon points="375.90,204.25 375.90,144.60 383.60,152.30 383.60,196.55" fill="#1cf01c" />
<polygon points="375.90,83.35 375.90,143.00 383.60,135.30 383.60,91.05" fill="#1cf01c" />
<polygon points="369.00,197.30 376.50,197.30 376.50,204.20 369.00,204.20" fill="#1cf01c" />
<polygon points="427.75,82.80 464.65,82.80 457.15,90.50 435.25,90.50" fill="#1cf01c" />
<polygon points="465.20,83.35 465.20,143.00 457.50,135.30 457.50,91.05" fill="#1cf01c" />
<polygon points="465.20,204.25 465.20,144.60 457.50,152.30 457.50,196.55" fill="#1cf01c" />
<polygon points="427.75,204.80 464.65,204.80 457.15,197.10 435.25,197.10" fill="#1cf01c" />
<polygon points="427.20,204.25 427.20,144.60 434.90,152.30 434.90,196.55" fill="#1cf01c" />
<polygon points="427.20,83.35 427.20,143.00 434.90,135.30 434.90,91.05" fill="#1cf01c" />
<polygon points="479.05,82.80 515.95,82.80 508.45,90.50 486.55,90.50" fill="#1cf01c" />
<polygon points="516.50,83.35 516.50,143.00 508.80,135.30 508.80,91.05" fill="#1cf01c" />
<polygon points="516.50,204.25 516.50,144.60 508.80,152.30 508.80,196.55" fill="#1cf01c" />
<polygon points="479.05,204.80 515.95,204.80 508.45,197.10 486.55,197.10" fill="#1cf01c" />
<polygon points="478.50,204.25 478.50,144.60 486.20,152.30 486.20,196.55" fill="#1cf01c" />
<polygon points="478.50,83.35 478.50,143.00 486.20,135.30 486.20,91.05" fill="#1cf01c" />
<text x="378.70" y="214.50" font-size="8.2" text-anchor="start" fill="#7eb47e" font-weight="normal" textLength="92.20" lengthAdjust="spacingAndGlyphs" >Input Signal Under Range</text>
<rect x="537.10" y="70.00" width="63.60" height="148.60" fill="#d6d3ce" />
<rect x="537.10" y="70.00" width="62.85" height="0.75" fill="#ffffff" />
<rect x="537.10" y="70.00" width="0.75" height="147.85" fill="#ffffff" />
<rect x="537.85" y="217.10" width="62.85" height="0.75" fill="#808080" />
<rect x="599.20" y="70.75" width="0.75" height="147.85" fill="#808080" />
<rect x="537.10" y="217.85" width="63.60" height="0.75" fill="#404040" />
<rect x="599.95" y="70.00" width="0.75" height="148.60" fill="#404040" />
<rect x="565.60" y="83.60" width="30.10" height="119.10" fill="#d9d6d1" />
<rect x="595.70" y="83.20" width="1.00" height="120.50" fill="#f8f8f6" />
<rect x="564.60" y="202.70" width="32.10" height="1.00" fill="#f8f8f6" />
<rect x="564.60" y="83.10" width="31.40" height="1.00" fill="#3a3a3a" />
<rect x="564.60" y="83.10" width="1.00" height="119.60" fill="#303030" />
<polygon points="571.40,202.40 595.50,202.40 595.50,193.40" fill="#2ee62e" />
<line x1="555.20" y1="204.50" x2="562.90" y2="204.50" stroke="#e06c6c" stroke-width="1" />
<text x="553.00" y="205.75" font-size="8.5" text-anchor="end" fill="#000" font-weight="normal"  stroke="#000" stroke-width="0.28">120</text>
<line x1="559.90" y1="199.50" x2="562.90" y2="199.50" stroke="#2c2c2c" stroke-width="1" />
<line x1="559.90" y1="194.50" x2="562.90" y2="194.50" stroke="#2c2c2c" stroke-width="1" />
<line x1="559.90" y1="189.50" x2="562.90" y2="189.50" stroke="#2c2c2c" stroke-width="1" />
<line x1="559.90" y1="184.50" x2="562.90" y2="184.50" stroke="#2c2c2c" stroke-width="1" />
<line x1="555.20" y1="179.50" x2="562.90" y2="179.50" stroke="#e06c6c" stroke-width="1" />
<text x="553.00" y="181.57" font-size="8.5" text-anchor="end" fill="#000" font-weight="normal"  stroke="#000" stroke-width="0.28">130</text>
<line x1="559.90" y1="175.50" x2="562.90" y2="175.50" stroke="#2c2c2c" stroke-width="1" />
<line x1="559.90" y1="170.50" x2="562.90" y2="170.50" stroke="#2c2c2c" stroke-width="1" />
<line x1="559.90" y1="165.50" x2="562.90" y2="165.50" stroke="#2c2c2c" stroke-width="1" />
<line x1="559.90" y1="160.50" x2="562.90" y2="160.50" stroke="#2c2c2c" stroke-width="1" />
<line x1="555.20" y1="155.50" x2="562.90" y2="155.50" stroke="#e06c6c" stroke-width="1" />
<text x="553.00" y="157.39" font-size="8.5" text-anchor="end" fill="#000" font-weight="normal"  stroke="#000" stroke-width="0.28">140</text>
<line x1="559.90" y1="150.50" x2="562.90" y2="150.50" stroke="#2c2c2c" stroke-width="1" />
<line x1="559.90" y1="146.50" x2="562.90" y2="146.50" stroke="#2c2c2c" stroke-width="1" />
<line x1="559.90" y1="141.50" x2="562.90" y2="141.50" stroke="#2c2c2c" stroke-width="1" />
<line x1="559.90" y1="136.50" x2="562.90" y2="136.50" stroke="#2c2c2c" stroke-width="1" />
<line x1="555.20" y1="131.50" x2="562.90" y2="131.50" stroke="#e06c6c" stroke-width="1" />
<text x="553.00" y="133.21" font-size="8.5" text-anchor="end" fill="#000" font-weight="normal"  stroke="#000" stroke-width="0.28">150</text>
<line x1="559.90" y1="126.50" x2="562.90" y2="126.50" stroke="#2c2c2c" stroke-width="1" />
<line x1="559.90" y1="121.50" x2="562.90" y2="121.50" stroke="#2c2c2c" stroke-width="1" />
<line x1="559.90" y1="117.50" x2="562.90" y2="117.50" stroke="#2c2c2c" stroke-width="1" />
<line x1="559.90" y1="112.50" x2="562.90" y2="112.50" stroke="#2c2c2c" stroke-width="1" />
<line x1="555.20" y1="107.50" x2="562.90" y2="107.50" stroke="#e06c6c" stroke-width="1" />
<text x="553.00" y="109.03" font-size="8.5" text-anchor="end" fill="#000" font-weight="normal"  stroke="#000" stroke-width="0.28">160</text>
<line x1="559.90" y1="102.50" x2="562.90" y2="102.50" stroke="#2c2c2c" stroke-width="1" />
<line x1="559.90" y1="97.50" x2="562.90" y2="97.50" stroke="#2c2c2c" stroke-width="1" />
<line x1="559.90" y1="92.50" x2="562.90" y2="92.50" stroke="#2c2c2c" stroke-width="1" />
<line x1="559.90" y1="87.50" x2="562.90" y2="87.50" stroke="#2c2c2c" stroke-width="1" />
<line x1="555.20" y1="83.50" x2="562.90" y2="83.50" stroke="#e06c6c" stroke-width="1" />
<text x="553.00" y="84.85" font-size="8.5" text-anchor="end" fill="#000" font-weight="normal"  stroke="#000" stroke-width="0.28">170</text>
<rect x="320.00" y="224.60" width="280.50" height="149.30" fill="#d6d3ce" />
<rect x="320.00" y="224.60" width="279.75" height="0.75" fill="#ffffff" />
<rect x="320.00" y="224.60" width="0.75" height="148.55" fill="#ffffff" />
<rect x="320.75" y="372.40" width="279.75" height="0.75" fill="#808080" />
<rect x="599.00" y="225.35" width="0.75" height="148.55" fill="#808080" />
<rect x="320.00" y="373.15" width="280.50" height="0.75" fill="#404040" />
<rect x="599.75" y="224.60" width="0.75" height="149.30" fill="#404040" />
<text x="417.80" y="234.60" font-size="8.2" text-anchor="start" fill="#000" font-weight="normal" textLength="83.50" lengthAdjust="spacingAndGlyphs"  stroke="#000" stroke-width="0.28">Oscilloscope (2X Zoom)</text>
<rect x="346.90" y="247.60" width="247.60" height="112.10" fill="#f4f3f0" />
<rect x="346.90" y="247.60" width="246.80" height="111.30" fill="#6a6865" />
<rect x="347.70" y="248.40" width="246.00" height="110.50" fill="#000" />
<line x1="334.70" y1="247.20" x2="334.70" y2="361.40" stroke="#303030" stroke-width="1" />
<line x1="334.40" y1="247.50" x2="345.30" y2="247.50" stroke="#e06c6c" stroke-width="1" />
<text x="332.50" y="249.60" font-size="8.5" text-anchor="end" fill="#000" font-weight="normal"  stroke="#000" stroke-width="0.28">0</text>
<line x1="334.70" y1="259.50" x2="339.70" y2="259.50" stroke="#2c2c2c" stroke-width="1" />
<line x1="334.70" y1="270.50" x2="339.70" y2="270.50" stroke="#2c2c2c" stroke-width="1" />
<line x1="334.70" y1="281.50" x2="339.70" y2="281.50" stroke="#2c2c2c" stroke-width="1" />
<line x1="334.70" y1="292.50" x2="339.70" y2="292.50" stroke="#2c2c2c" stroke-width="1" />
<line x1="334.40" y1="304.50" x2="345.30" y2="304.50" stroke="#e06c6c" stroke-width="1" />
<text x="332.50" y="306.20" font-size="8.5" text-anchor="end" fill="#000" font-weight="normal"  stroke="#000" stroke-width="0.28">-1</text>
<line x1="334.70" y1="315.50" x2="339.70" y2="315.50" stroke="#2c2c2c" stroke-width="1" />
<line x1="334.70" y1="326.50" x2="339.70" y2="326.50" stroke="#2c2c2c" stroke-width="1" />
<line x1="334.70" y1="338.50" x2="339.70" y2="338.50" stroke="#2c2c2c" stroke-width="1" />
<line x1="334.70" y1="349.50" x2="339.70" y2="349.50" stroke="#2c2c2c" stroke-width="1" />
<line x1="334.40" y1="360.50" x2="345.30" y2="360.50" stroke="#e06c6c" stroke-width="1" />
<text x="332.50" y="362.80" font-size="8.5" text-anchor="end" fill="#000" font-weight="normal"  stroke="#000" stroke-width="0.28">-1</text>
<line x1="347.70" y1="304.20" x2="593.70" y2="304.20" stroke="#808080" stroke-width="0.85" />
<rect x="320.00" y="380.00" width="280.50" height="149.60" fill="#d6d3ce" />
<rect x="320.00" y="380.00" width="279.75" height="0.75" fill="#ffffff" />
<rect x="320.00" y="380.00" width="0.75" height="148.85" fill="#ffffff" />
<rect x="320.75" y="528.10" width="279.75" height="0.75" fill="#808080" />
<rect x="599.00" y="380.75" width="0.75" height="148.85" fill="#808080" />
<rect x="320.00" y="528.85" width="280.50" height="0.75" fill="#404040" />
<rect x="599.75" y="380.00" width="0.75" height="149.60" fill="#404040" />
<text x="426.30" y="390.00" font-size="8.2" text-anchor="start" fill="#000" font-weight="normal" textLength="66.50" lengthAdjust="spacingAndGlyphs"  stroke="#000" stroke-width="0.28">Spectrum Analyzer</text>
<rect x="350.70" y="399.60" width="247.00" height="102.20" fill="#f4f3f0" />
<rect x="350.70" y="399.60" width="246.20" height="101.40" fill="#6a6865" />
<rect x="351.50" y="400.40" width="245.40" height="100.60" fill="#000" />
<line x1="351.50" y1="420.52" x2="596.90" y2="420.52" stroke="#9c9c9c" stroke-width="0.85" />
<line x1="351.50" y1="440.64" x2="596.90" y2="440.64" stroke="#9c9c9c" stroke-width="0.85" />
<line x1="351.50" y1="460.76" x2="596.90" y2="460.76" stroke="#9c9c9c" stroke-width="0.85" />
<line x1="351.50" y1="480.88" x2="596.90" y2="480.88" stroke="#9c9c9c" stroke-width="0.85" />
<line x1="338.80" y1="400.00" x2="338.80" y2="501.40" stroke="#303030" stroke-width="1" />
<line x1="338.40" y1="502.50" x2="348.20" y2="502.50" stroke="#e06c6c" stroke-width="1" />
<text x="336.60" y="503.70" font-size="8.5" text-anchor="end" fill="#000" font-weight="normal"  stroke="#000" stroke-width="0.28">120</text>
<line x1="338.80" y1="499.90" x2="343.40" y2="499.90" stroke="#2c2c2c" stroke-width="0.9" />
<line x1="338.80" y1="497.21" x2="343.40" y2="497.21" stroke="#2c2c2c" stroke-width="0.9" />
<line x1="338.80" y1="494.52" x2="343.40" y2="494.52" stroke="#2c2c2c" stroke-width="0.9" />
<line x1="338.80" y1="491.83" x2="343.40" y2="491.83" stroke="#2c2c2c" stroke-width="0.9" />
<line x1="338.80" y1="489.14" x2="343.40" y2="489.14" stroke="#2c2c2c" stroke-width="0.9" />
<line x1="338.80" y1="486.45" x2="343.40" y2="486.45" stroke="#2c2c2c" stroke-width="0.9" />
<line x1="338.40" y1="481.50" x2="348.20" y2="481.50" stroke="#e06c6c" stroke-width="1" />
<text x="336.60" y="483.50" font-size="8.5" text-anchor="end" fill="#000" font-weight="normal"  stroke="#000" stroke-width="0.28">130</text>
<line x1="338.80" y1="479.70" x2="343.40" y2="479.70" stroke="#2c2c2c" stroke-width="0.9" />
<line x1="338.80" y1="477.01" x2="343.40" y2="477.01" stroke="#2c2c2c" stroke-width="0.9" />
<line x1="338.80" y1="474.32" x2="343.40" y2="474.32" stroke="#2c2c2c" stroke-width="0.9" />
<line x1="338.80" y1="471.63" x2="343.40" y2="471.63" stroke="#2c2c2c" stroke-width="0.9" />
<line x1="338.80" y1="468.94" x2="343.40" y2="468.94" stroke="#2c2c2c" stroke-width="0.9" />
<line x1="338.80" y1="466.25" x2="343.40" y2="466.25" stroke="#2c2c2c" stroke-width="0.9" />
<line x1="338.40" y1="461.50" x2="348.20" y2="461.50" stroke="#e06c6c" stroke-width="1" />
<text x="336.60" y="463.30" font-size="8.5" text-anchor="end" fill="#000" font-weight="normal"  stroke="#000" stroke-width="0.28">140</text>
<line x1="338.80" y1="459.50" x2="343.40" y2="459.50" stroke="#2c2c2c" stroke-width="0.9" />
<line x1="338.80" y1="456.81" x2="343.40" y2="456.81" stroke="#2c2c2c" stroke-width="0.9" />
<line x1="338.80" y1="454.12" x2="343.40" y2="454.12" stroke="#2c2c2c" stroke-width="0.9" />
<line x1="338.80" y1="451.43" x2="343.40" y2="451.43" stroke="#2c2c2c" stroke-width="0.9" />
<line x1="338.80" y1="448.74" x2="343.40" y2="448.74" stroke="#2c2c2c" stroke-width="0.9" />
<line x1="338.80" y1="446.05" x2="343.40" y2="446.05" stroke="#2c2c2c" stroke-width="0.9" />
<line x1="338.40" y1="441.50" x2="348.20" y2="441.50" stroke="#e06c6c" stroke-width="1" />
<text x="336.60" y="443.10" font-size="8.5" text-anchor="end" fill="#000" font-weight="normal"  stroke="#000" stroke-width="0.28">150</text>
<line x1="338.80" y1="439.30" x2="343.40" y2="439.30" stroke="#2c2c2c" stroke-width="0.9" />
<line x1="338.80" y1="436.61" x2="343.40" y2="436.61" stroke="#2c2c2c" stroke-width="0.9" />
<line x1="338.80" y1="433.92" x2="343.40" y2="433.92" stroke="#2c2c2c" stroke-width="0.9" />
<line x1="338.80" y1="431.23" x2="343.40" y2="431.23" stroke="#2c2c2c" stroke-width="0.9" />
<line x1="338.80" y1="428.54" x2="343.40" y2="428.54" stroke="#2c2c2c" stroke-width="0.9" />
<line x1="338.80" y1="425.85" x2="343.40" y2="425.85" stroke="#2c2c2c" stroke-width="0.9" />
<line x1="338.40" y1="421.50" x2="348.20" y2="421.50" stroke="#e06c6c" stroke-width="1" />
<text x="336.60" y="422.90" font-size="8.5" text-anchor="end" fill="#000" font-weight="normal"  stroke="#000" stroke-width="0.28">160</text>
<line x1="338.80" y1="419.10" x2="343.40" y2="419.10" stroke="#2c2c2c" stroke-width="0.9" />
<line x1="338.80" y1="416.41" x2="343.40" y2="416.41" stroke="#2c2c2c" stroke-width="0.9" />
<line x1="338.80" y1="413.72" x2="343.40" y2="413.72" stroke="#2c2c2c" stroke-width="0.9" />
<line x1="338.80" y1="411.03" x2="343.40" y2="411.03" stroke="#2c2c2c" stroke-width="0.9" />
<line x1="338.80" y1="408.34" x2="343.40" y2="408.34" stroke="#2c2c2c" stroke-width="0.9" />
<line x1="338.80" y1="405.65" x2="343.40" y2="405.65" stroke="#2c2c2c" stroke-width="0.9" />
<line x1="338.40" y1="400.50" x2="348.20" y2="400.50" stroke="#e06c6c" stroke-width="1" />
<text x="336.60" y="402.70" font-size="8.5" text-anchor="end" fill="#000" font-weight="normal"  stroke="#000" stroke-width="0.28">170</text>
<line x1="351.10" y1="515.20" x2="597.50" y2="515.20" stroke="#101010" stroke-width="1" />
<line x1="351.50" y1="504.10" x2="351.50" y2="515.30" stroke="#cc5050" stroke-width="1" />
<text x="350.50" y="523.10" font-size="8.5" text-anchor="start" fill="#000" font-weight="normal"  stroke="#000" stroke-width="0.28">10</text>
<line x1="365.50" y1="510.00" x2="365.50" y2="514.90" stroke="#2c2c2c" stroke-width="1" />
<line x1="378.50" y1="504.10" x2="378.50" y2="515.30" stroke="#cc5050" stroke-width="1" />
<text x="378.37" y="523.10" font-size="8.5" text-anchor="middle" fill="#000" font-weight="normal"  stroke="#000" stroke-width="0.28">20</text>
<line x1="392.50" y1="510.00" x2="392.50" y2="514.90" stroke="#2c2c2c" stroke-width="1" />
<line x1="406.50" y1="504.10" x2="406.50" y2="515.30" stroke="#cc5050" stroke-width="1" />
<text x="405.63" y="523.10" font-size="8.5" text-anchor="middle" fill="#000" font-weight="normal"  stroke="#000" stroke-width="0.28">30</text>
<line x1="419.50" y1="510.00" x2="419.50" y2="514.90" stroke="#2c2c2c" stroke-width="1" />
<line x1="433.50" y1="504.10" x2="433.50" y2="515.30" stroke="#cc5050" stroke-width="1" />
<text x="432.90" y="523.10" font-size="8.5" text-anchor="middle" fill="#000" font-weight="normal"  stroke="#000" stroke-width="0.28">40</text>
<line x1="446.50" y1="510.00" x2="446.50" y2="514.90" stroke="#2c2c2c" stroke-width="1" />
<line x1="460.50" y1="504.10" x2="460.50" y2="515.30" stroke="#cc5050" stroke-width="1" />
<text x="460.17" y="523.10" font-size="8.5" text-anchor="middle" fill="#000" font-weight="normal"  stroke="#000" stroke-width="0.28">50</text>
<line x1="474.50" y1="510.00" x2="474.50" y2="514.90" stroke="#2c2c2c" stroke-width="1" />
<line x1="487.50" y1="504.10" x2="487.50" y2="515.30" stroke="#cc5050" stroke-width="1" />
<text x="487.43" y="523.10" font-size="8.5" text-anchor="middle" fill="#000" font-weight="normal"  stroke="#000" stroke-width="0.28">60</text>
<line x1="501.50" y1="510.00" x2="501.50" y2="514.90" stroke="#2c2c2c" stroke-width="1" />
<line x1="515.50" y1="504.10" x2="515.50" y2="515.30" stroke="#cc5050" stroke-width="1" />
<text x="514.70" y="523.10" font-size="8.5" text-anchor="middle" fill="#000" font-weight="normal"  stroke="#000" stroke-width="0.28">70</text>
<line x1="528.50" y1="510.00" x2="528.50" y2="514.90" stroke="#2c2c2c" stroke-width="1" />
<line x1="542.50" y1="504.10" x2="542.50" y2="515.30" stroke="#cc5050" stroke-width="1" />
<text x="541.97" y="523.10" font-size="8.5" text-anchor="middle" fill="#000" font-weight="normal"  stroke="#000" stroke-width="0.28">80</text>
<line x1="556.50" y1="510.00" x2="556.50" y2="514.90" stroke="#2c2c2c" stroke-width="1" />
<line x1="569.50" y1="504.10" x2="569.50" y2="515.30" stroke="#cc5050" stroke-width="1" />
<text x="569.23" y="523.10" font-size="8.5" text-anchor="middle" fill="#000" font-weight="normal"  stroke="#000" stroke-width="0.28">90</text>
<line x1="583.50" y1="510.00" x2="583.50" y2="514.90" stroke="#2c2c2c" stroke-width="1" />
<line x1="596.50" y1="504.10" x2="596.50" y2="515.30" stroke="#cc5050" stroke-width="1" />
<text x="597.80" y="523.10" font-size="8.5" text-anchor="end" fill="#000" font-weight="normal"  stroke="#000" stroke-width="0.28">100</text>
<rect x="613.30" y="58.10" width="143.70" height="0.75" fill="#8a8884" />
<rect x="613.30" y="58.10" width="0.75" height="114.90" fill="#8a8884" />
<rect x="613.30" y="172.25" width="143.70" height="0.75" fill="#8a8884" />
<rect x="756.25" y="58.10" width="0.75" height="114.90" fill="#8a8884" />
<rect x="614.05" y="58.85" width="143.70" height="0.75" fill="#fbfbf9" />
<rect x="614.05" y="58.85" width="0.75" height="114.90" fill="#fbfbf9" />
<rect x="613.30" y="173.00" width="144.45" height="0.75" fill="#fbfbf9" />
<rect x="757.00" y="58.10" width="0.75" height="115.65" fill="#fbfbf9" />
<rect x="619.30" y="54.10" width="22.40" height="8.00" fill="#d6d3ce" />
<text x="620.80" y="61.80" font-size="8.2" text-anchor="start" fill="#000" font-weight="normal" textLength="19.40" lengthAdjust="spacingAndGlyphs"  stroke="#000" stroke-width="0.28">Timer</text>
<rect x="624.00" y="70.00" width="122.00" height="62.30" fill="#ffffff" />
<rect x="624.00" y="70.00" width="120.10" height="60.60" fill="#8e8c88" />
<rect x="625.00" y="71.00" width="118.90" height="59.40" fill="#4a4a48" />
<rect x="626.00" y="72.00" width="117.60" height="58.10" fill="#000" />
<text x="640.20" y="120.20" font-size="51" text-anchor="start" fill="#e81414" font-weight="bold" textLength="90.60" lengthAdjust="spacingAndGlyphs" stroke="#e81414" stroke-width="1.5" stroke-linejoin="round">SPL</text>
<rect x="625.20" y="138.20" width="36.20" height="23.40" fill="#d6d3ce" />
<rect x="625.20" y="138.20" width="35.45" height="0.75" fill="#ffffff" />
<rect x="625.20" y="138.20" width="0.75" height="22.65" fill="#ffffff" />
<rect x="625.95" y="160.10" width="35.45" height="0.75" fill="#808080" />
<rect x="659.90" y="138.95" width="0.75" height="22.65" fill="#808080" />
<rect x="625.20" y="160.85" width="36.20" height="0.75" fill="#404040" />
<rect x="660.65" y="138.20" width="0.75" height="23.40" fill="#404040" />
<text x="634.35" y="152.95" font-size="8.2" text-anchor="start" fill="#fff" font-weight="normal" textLength="20.20" lengthAdjust="spacingAndGlyphs" >Reset</text>
<text x="633.60" y="152.20" font-size="8.2" text-anchor="start" fill="#8a8884" font-weight="normal" textLength="20.20" lengthAdjust="spacingAndGlyphs" >Reset</text>
<rect x="667.40" y="138.20" width="36.20" height="23.40" fill="#d6d3ce" />
<rect x="667.40" y="138.20" width="35.45" height="0.75" fill="#ffffff" />
<rect x="667.40" y="138.20" width="0.75" height="22.65" fill="#ffffff" />
<rect x="668.15" y="160.10" width="35.45" height="0.75" fill="#808080" />
<rect x="702.10" y="138.95" width="0.75" height="22.65" fill="#808080" />
<rect x="667.40" y="160.85" width="36.20" height="0.75" fill="#404040" />
<rect x="702.85" y="138.20" width="0.75" height="23.40" fill="#404040" />
<text x="678.35" y="152.95" font-size="8.2" text-anchor="start" fill="#fff" font-weight="normal" textLength="16.20" lengthAdjust="spacingAndGlyphs" >Start</text>
<text x="677.60" y="152.20" font-size="8.2" text-anchor="start" fill="#8a8884" font-weight="normal" textLength="16.20" lengthAdjust="spacingAndGlyphs" >Start</text>
<rect x="709.40" y="138.20" width="36.40" height="23.40" fill="#d6d3ce" />
<rect x="709.40" y="138.20" width="35.65" height="0.75" fill="#ffffff" />
<rect x="709.40" y="138.20" width="0.75" height="22.65" fill="#ffffff" />
<rect x="710.15" y="160.10" width="35.65" height="0.75" fill="#808080" />
<rect x="744.30" y="138.95" width="0.75" height="22.65" fill="#808080" />
<rect x="709.40" y="160.85" width="36.40" height="0.75" fill="#404040" />
<rect x="745.05" y="138.20" width="0.75" height="23.40" fill="#404040" />
<text x="719.60" y="152.20" font-size="8.2" text-anchor="start" fill="#000" font-weight="normal" textLength="16.80" lengthAdjust="spacingAndGlyphs"  stroke="#000" stroke-width="0.28">Stop</text>
<rect x="613.30" y="184.00" width="143.70" height="0.75" fill="#8a8884" />
<rect x="613.30" y="184.00" width="0.75" height="96.40" fill="#8a8884" />
<rect x="613.30" y="279.65" width="143.70" height="0.75" fill="#8a8884" />
<rect x="756.25" y="184.00" width="0.75" height="96.40" fill="#8a8884" />
<rect x="614.05" y="184.75" width="143.70" height="0.75" fill="#fbfbf9" />
<rect x="614.05" y="184.75" width="0.75" height="96.40" fill="#fbfbf9" />
<rect x="613.30" y="280.40" width="144.45" height="0.75" fill="#fbfbf9" />
<rect x="757.00" y="184.00" width="0.75" height="97.15" fill="#fbfbf9" />
<rect x="619.20" y="180.00" width="21.70" height="8.00" fill="#d6d3ce" />
<text x="621.40" y="187.90" font-size="8.2" text-anchor="start" fill="#ffffff" font-weight="normal" textLength="18.70" lengthAdjust="spacingAndGlyphs" >Mode</text>
<text x="620.70" y="187.20" font-size="8.2" text-anchor="start" fill="#8a8884" font-weight="normal" textLength="18.70" lengthAdjust="spacingAndGlyphs" >Mode</text>
<rect x="625.40" y="192.80" width="40.60" height="39.40" fill="#ffffff" />
<rect x="625.40" y="192.80" width="40.60" height="1.30" fill="#404040" />
<rect x="625.40" y="192.80" width="1.30" height="39.40" fill="#404040" />
<rect x="626.70" y="231.40" width="39.30" height="0.80" fill="#e8e8e8" />
<rect x="665.20" y="194.10" width="0.80" height="38.10" fill="#c0c0c0" />
<circle cx="646.2" cy="212.9" r="17.4" fill="#3a3f3b"/>
<circle cx="646.2" cy="212.9" r="14.8" fill="#183f26"/>
<circle cx="646.2" cy="212.9" r="16.2" fill="none" stroke="#4e5650" stroke-width="0.9"/>
<text x="634.50" y="224.90" font-size="33.5" text-anchor="start" fill="#aaf8b8" font-weight="bold" textLength="23.60" lengthAdjust="spacingAndGlyphs" >SPL</text>
<rect x="667.60" y="193.00" width="39.80" height="39.40" fill="#ffffff" />
<rect x="667.60" y="231.00" width="39.80" height="1.40" fill="#484848" />
<rect x="706.00" y="193.00" width="1.40" height="39.40" fill="#484848" />
<rect x="667.60" y="193.00" width="38.40" height="0.70" fill="#f4f4f4" />
<rect x="667.60" y="193.00" width="0.70" height="38.00" fill="#f4f4f4" />
<text x="669.60" y="208.90" font-size="7.8" text-anchor="start" fill="#2440c0" font-weight="bold" textLength="34.80" lengthAdjust="spacingAndGlyphs" font-style="italic" stroke="#2440c0" stroke-width="0.35">dB Drag</text>
<text x="676.60" y="216.20" font-size="7.6" text-anchor="start" fill="#b42832" font-weight="bold" textLength="20.40" lengthAdjust="spacingAndGlyphs" font-style="italic" style="font-family:'Liberation Serif',serif">Racing</text>
<path d="M682.8,217.6 L686.4,222.6 L690.2,217.6" fill="none" stroke="#a0a4b0" stroke-width="0.8"/>
<path d="M671.6,217.4 h4 M696.6,217.4 h4" stroke="#b0b4c0" stroke-width="0.7" fill="none"/>
<path d="M672.6,220.6 h2.6 M697.2,220.6 h2.6" stroke="#9098a8" stroke-width="1.2" fill="none"/>
<rect x="709.20" y="193.00" width="39.40" height="39.40" fill="#e31a1a" />
<rect x="709.20" y="231.00" width="39.40" height="1.40" fill="#484848" />
<rect x="747.20" y="193.00" width="1.40" height="39.40" fill="#484848" />
<rect x="709.20" y="193.00" width="38.00" height="0.70" fill="#f4f4f4" />
<rect x="709.20" y="193.00" width="0.70" height="38.00" fill="#f4f4f4" />
<path d="M711.0,227.2 C712.4,216 716.5,206.5 723,202.2 C729,199.0 735,198.0 741.6,197.6 L746.4,197.6 L746.6,224.6 C738,226.2 726,226.8 711.0,227.2 Z" fill="#ffffff"/>
<path d="M738.6,195.4 L746.8,194.6 L746.8,212 C745.4,205 742.6,199 738.6,195.4 Z" fill="#181010"/>
<text x="710.40" y="224.40" font-size="30.5" text-anchor="start" fill="#0a0808" font-weight="bold" textLength="35.20" lengthAdjust="spacingAndGlyphs" font-style="italic" stroke="#0a0808" stroke-width="0.7">MECA</text>
<rect x="625.60" y="233.80" width="40.40" height="39.20" fill="#ffffff" />
<rect x="625.60" y="271.60" width="40.40" height="1.40" fill="#484848" />
<rect x="664.60" y="233.80" width="1.40" height="39.20" fill="#484848" />
<rect x="625.60" y="233.80" width="39.00" height="0.70" fill="#f4f4f4" />
<rect x="625.60" y="233.80" width="0.70" height="37.80" fill="#f4f4f4" />
<rect x="626.40" y="234.80" width="38.00" height="5.00" fill="#e09452" />
<rect x="627.60" y="239.80" width="36.80" height="26.60" fill="#38309e" />
<rect x="627.00" y="268.20" width="37.40" height="3.40" fill="#e09452" />
<path d="M628.8,264.2 V243.6 H637.4 V264.2 H634.4 V246.8 H631.8 V264.2 Z" fill="#ffffff"/>
<text x="638.60" y="264.20" font-size="28.5" text-anchor="start" fill="#ffffff" font-weight="bold" textLength="24.60" lengthAdjust="spacingAndGlyphs" stroke="#ffffff" stroke-width="0.5">SPL</text>
<rect x="667.60" y="233.80" width="39.80" height="39.20" fill="#ffffff" />
<rect x="667.60" y="271.60" width="39.80" height="1.40" fill="#484848" />
<rect x="706.00" y="233.80" width="1.40" height="39.20" fill="#484848" />
<rect x="667.60" y="233.80" width="38.40" height="0.70" fill="#f4f4f4" />
<rect x="667.60" y="233.80" width="0.70" height="37.80" fill="#f4f4f4" />
<ellipse cx="687.2" cy="252.6" rx="16.9" ry="7.9" fill="#d42420" transform="rotate(-7 687.2 252.6)"/>
<text x="672.40" y="255.50" font-size="8.4" text-anchor="start" fill="#f2d42a" font-weight="bold" textLength="30.20" lengthAdjust="spacingAndGlyphs" font-style="italic" stroke="#f2d42a" stroke-width="0.3" transform="rotate(-5 687.2 252.6)">USACi</text>
<rect x="708.80" y="233.80" width="40.40" height="39.20" fill="#ffffff" />
<rect x="708.80" y="271.60" width="40.40" height="1.40" fill="#484848" />
<rect x="747.80" y="233.80" width="1.40" height="39.20" fill="#484848" />
<rect x="708.80" y="233.80" width="39.00" height="0.70" fill="#f4f4f4" />
<rect x="708.80" y="233.80" width="0.70" height="37.80" fill="#f4f4f4" />
<rect x="713.80" y="241.20" width="30.00" height="23.60" fill="#a9a9a9" />
<text x="716.40" y="252.60" font-size="6.4" text-anchor="start" fill="#fafafa" font-weight="bold" textLength="24.40" lengthAdjust="spacingAndGlyphs" stroke="#2a2a2a" stroke-width="0.9" paint-order="stroke">Display</text>
<text x="716.20" y="258.40" font-size="6.4" text-anchor="start" fill="#fafafa" font-weight="bold" textLength="24.80" lengthAdjust="spacingAndGlyphs" stroke="#2a2a2a" stroke-width="0.9" paint-order="stroke">Options</text>
<rect x="613.30" y="291.80" width="143.70" height="0.75" fill="#8a8884" />
<rect x="613.30" y="291.80" width="0.75" height="125.20" fill="#8a8884" />
<rect x="613.30" y="416.25" width="143.70" height="0.75" fill="#8a8884" />
<rect x="756.25" y="291.80" width="0.75" height="125.20" fill="#8a8884" />
<rect x="614.05" y="292.55" width="143.70" height="0.75" fill="#fbfbf9" />
<rect x="614.05" y="292.55" width="0.75" height="125.20" fill="#fbfbf9" />
<rect x="613.30" y="417.00" width="144.45" height="0.75" fill="#fbfbf9" />
<rect x="757.00" y="291.80" width="0.75" height="125.95" fill="#fbfbf9" />
<rect x="618.70" y="287.80" width="51.00" height="8.00" fill="#d6d3ce" />
<text x="620.20" y="295.20" font-size="8.2" text-anchor="start" fill="#000" font-weight="normal" textLength="48.00" lengthAdjust="spacingAndGlyphs"  stroke="#000" stroke-width="0.28">SPL Readout</text>
<circle cx="630.5" cy="314.0" r="3.3" fill="#fff"/>
<path d="M628.00,316.50 A3.5,3.5 0 0 1 633.00,311.50" fill="none" stroke="#505050" stroke-width="1.2"/>
<path d="M628.00,316.50 A3.5,3.5 0 0 0 633.00,311.50" fill="none" stroke="#f6f6f4" stroke-width="1.0"/>
<circle cx="630.5" cy="331.9" r="3.3" fill="#fff"/>
<path d="M628.00,334.40 A3.5,3.5 0 0 1 633.00,329.40" fill="none" stroke="#505050" stroke-width="1.2"/>
<path d="M628.00,334.40 A3.5,3.5 0 0 0 633.00,329.40" fill="none" stroke="#f6f6f4" stroke-width="1.0"/>
<circle cx="630.5" cy="350.0" r="3.3" fill="#fff"/>
<path d="M628.00,352.50 A3.5,3.5 0 0 1 633.00,347.50" fill="none" stroke="#505050" stroke-width="1.2"/>
<path d="M628.00,352.50 A3.5,3.5 0 0 0 633.00,347.50" fill="none" stroke="#f6f6f4" stroke-width="1.0"/>
<circle cx="630.5" cy="350.0" r="1.3" fill="#000"/>
<text x="639.30" y="317.20" font-size="8.2" text-anchor="start" fill="#000" font-weight="normal" textLength="35.40" lengthAdjust="spacingAndGlyphs"  stroke="#000" stroke-width="0.28">Real Time</text>
<text x="639.30" y="335.40" font-size="8.2" text-anchor="start" fill="#000" font-weight="normal" textLength="55.80" lengthAdjust="spacingAndGlyphs"  stroke="#000" stroke-width="0.28">Rolling Average</text>
<text x="639.60" y="353.30" font-size="8.2" text-anchor="start" fill="#000" font-weight="normal" textLength="36.00" lengthAdjust="spacingAndGlyphs"  stroke="#000" stroke-width="0.28">Peak Hold</text>
<rect x="638.30" y="344.60" width="38.40" height="11.40" fill="none" stroke="#404040" stroke-width="0.75" stroke-dasharray="0.75,0.75"/>
<rect x="637.80" y="363.80" width="9.60" height="9.60" fill="#fff" />
<rect x="637.80" y="363.80" width="9.60" height="1.00" fill="#868480" />
<rect x="637.80" y="363.80" width="1.00" height="9.60" fill="#868480" />
<rect x="638.80" y="364.80" width="7.60" height="0.90" fill="#484846" />
<rect x="638.80" y="364.80" width="0.90" height="7.60" fill="#484846" />
<rect x="637.80" y="372.65" width="9.60" height="0.75" fill="#ffffff" />
<rect x="646.65" y="363.80" width="0.75" height="9.60" fill="#ffffff" />
<rect x="638.55" y="371.90" width="8.10" height="0.75" fill="#d6d3ce" />
<rect x="645.90" y="364.55" width="0.75" height="8.10" fill="#d6d3ce" />
<text x="651.10" y="371.10" font-size="8.2" text-anchor="start" fill="#000" font-weight="normal" textLength="39.30" lengthAdjust="spacingAndGlyphs"  stroke="#000" stroke-width="0.28">Auto Reset</text>
<text x="716.00" y="319.90" font-size="8.2" text-anchor="start" fill="#000" font-weight="normal" textLength="29.40" lengthAdjust="spacingAndGlyphs"  stroke="#000" stroke-width="0.28">Samples</text>
<rect x="715.60" y="323.20" width="30.00" height="17.70" fill="#fff" />
<rect x="715.60" y="323.20" width="30.00" height="1.00" fill="#868480" />
<rect x="715.60" y="323.20" width="1.00" height="17.70" fill="#868480" />
<rect x="716.60" y="324.20" width="28.00" height="0.90" fill="#484846" />
<rect x="716.60" y="324.20" width="0.90" height="15.70" fill="#484846" />
<rect x="715.60" y="340.15" width="30.00" height="0.75" fill="#ffffff" />
<rect x="744.85" y="323.20" width="0.75" height="17.70" fill="#ffffff" />
<rect x="716.35" y="339.40" width="28.50" height="0.75" fill="#d6d3ce" />
<rect x="744.10" y="323.95" width="0.75" height="16.20" fill="#d6d3ce" />
<text x="742.60" y="333.80" font-size="8.2" text-anchor="end" fill="#9a9894" font-weight="normal" >5</text>
<text x="716.00" y="355.80" font-size="8.2" text-anchor="start" fill="#000" font-weight="normal" textLength="26.00" lengthAdjust="spacingAndGlyphs"  stroke="#000" stroke-width="0.28">Interval</text>
<rect x="715.60" y="359.80" width="30.00" height="17.40" fill="#fff" />
<rect x="715.60" y="359.80" width="30.00" height="1.00" fill="#868480" />
<rect x="715.60" y="359.80" width="1.00" height="17.40" fill="#868480" />
<rect x="716.60" y="360.80" width="28.00" height="0.90" fill="#484846" />
<rect x="716.60" y="360.80" width="0.90" height="15.40" fill="#484846" />
<rect x="715.60" y="376.45" width="30.00" height="0.75" fill="#ffffff" />
<rect x="744.85" y="359.80" width="0.75" height="17.40" fill="#ffffff" />
<rect x="716.35" y="375.70" width="28.50" height="0.75" fill="#d6d3ce" />
<rect x="744.10" y="360.55" width="0.75" height="15.90" fill="#d6d3ce" />
<text x="742.60" y="369.20" font-size="8.2" text-anchor="end" fill="#9a9894" font-weight="normal" >10</text>
<rect x="624.80" y="388.60" width="121.60" height="19.20" fill="#d6d3ce" />
<rect x="624.80" y="388.60" width="120.85" height="0.75" fill="#ffffff" />
<rect x="624.80" y="388.60" width="0.75" height="18.45" fill="#ffffff" />
<rect x="625.55" y="406.30" width="120.85" height="0.75" fill="#808080" />
<rect x="744.90" y="389.35" width="0.75" height="18.45" fill="#808080" />
<rect x="624.80" y="407.05" width="121.60" height="0.75" fill="#404040" />
<rect x="745.65" y="388.60" width="0.75" height="19.20" fill="#404040" />
<text x="662.10" y="401.00" font-size="8.2" text-anchor="start" fill="#000" font-weight="normal" textLength="47.90" lengthAdjust="spacingAndGlyphs"  stroke="#000" stroke-width="0.28">Reset Display</text>
</svg>
</body></html>
